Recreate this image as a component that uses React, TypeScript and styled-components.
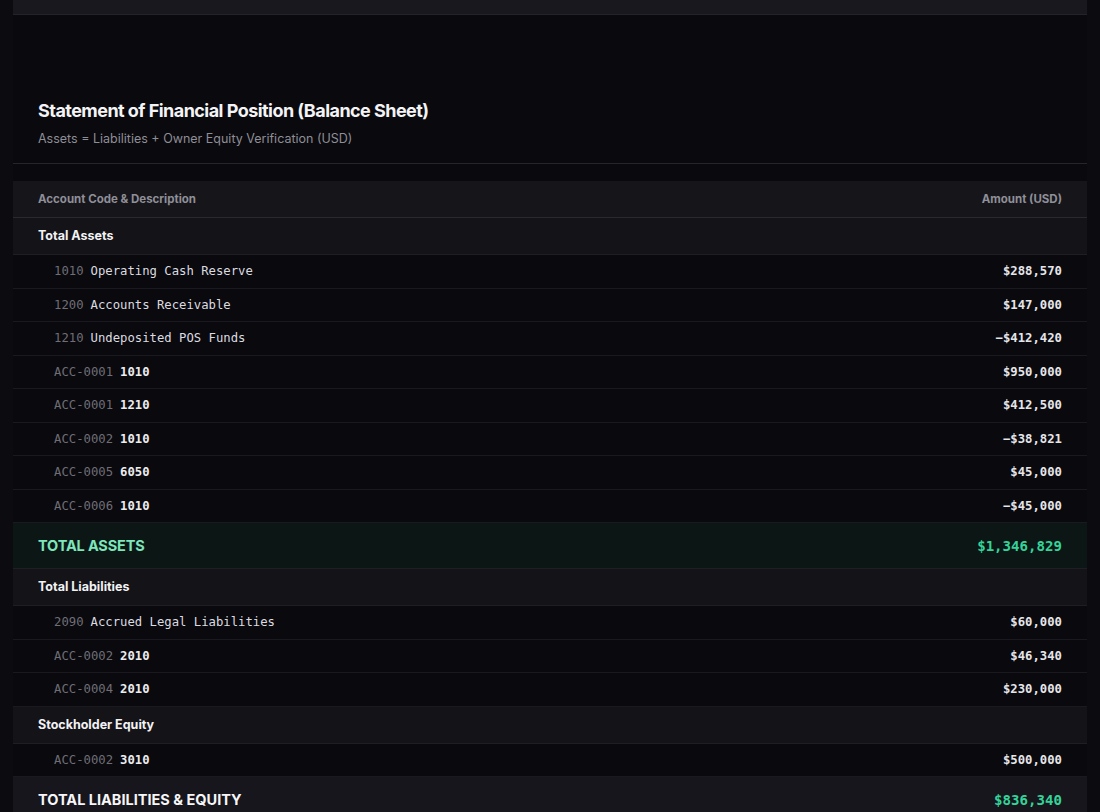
import React from "react";
import styled, { createGlobalStyle } from "styled-components";

const Global = createGlobalStyle`
  html, body { margin: 0; padding: 0; background: #0c0b10; }
  body { font-family: Inter, "Liberation Sans", Arial, sans-serif; -webkit-font-smoothing: antialiased; }
`;

const Page = styled.div`
  padding: 0 13px;
  min-height: 812px;
`;

const TopBar = styled.div`
  height: 14px;
  background: #19181f;
  border-bottom: 1px solid #24232a;
`;

const Card = styled.section`
  background: #0a090d;
  padding-top: 84px;
`;

const Header = styled.header`
  padding: 0 25px 15px;
  border-bottom: 1px solid #26252c;
`;

const Title = styled.h2`
  margin: 0;
  font-size: 18px;
  line-height: 24px;
  font-weight: 700;
  letter-spacing: -0.03em;
  color: #f4f4f6;
`;

const Subtitle = styled.p`
  margin: 7px 0 0;
  font-size: 12.5px;
  line-height: 18px;
  color: #8e8e97;
`;

const Table = styled.div`
  margin-top: 17px;
`;

const Row = styled.div<{ $kind: "head" | "section" | "item" | "total" | "grand" }>`
  display: flex;
  align-items: center;
  justify-content: space-between;
  line-height: 18px;
  padding: 0 25px 0 ${(p) => (p.$kind === "item" ? "41px" : "25px")};
  height: ${(p) =>
    p.$kind === "item" ? "33.5px" : p.$kind === "total" || p.$kind === "grand" ? "46px" : "37px"};
  box-sizing: border-box;
  background: ${(p) =>
    p.$kind === "head"
      ? "#16151a"
      : p.$kind === "section"
      ? "#141318"
      : p.$kind === "total"
      ? "#0c1715"
      : p.$kind === "grand"
      ? "#17161c"
      : "#0a090d"};
  border-bottom: 1px solid
    ${(p) => (p.$kind === "head" ? "#2a2930" : p.$kind === "item" ? "#1a191f" : "#1f1e24")};
`;

const HeadCell = styled.span`
  font-size: 11.5px;
  font-weight: 700;
  color: #8f8f98;
`;

const SectionLabel = styled.span`
  font-size: 12.5px;
  font-weight: 700;
  color: #f2f2f4;
`;

const Account = styled.span`
  display: flex;
  align-items: center;
  gap: 7px;
`;

const Mono = styled.span`
  font-family: "DejaVu Sans Mono", "Liberation Mono", monospace;
  font-size: 12.25px;
  line-height: 18px;
`;

const Code = styled(Mono)`
  color: #6f6e77;
`;

const Name = styled(Mono)<{ $strong?: boolean }>`
  color: ${(p) => (p.$strong ? "#ececef" : "#dcdce0")};
  font-weight: ${(p) => (p.$strong ? 700 : 400)};
`;

const Amount = styled(Mono)`
  color: #e6e6ea;
  font-weight: 700;
`;

const TotalLabel = styled.span<{ $green?: boolean }>`
  font-size: 14.5px;
  font-weight: 700;
  letter-spacing: ${(p) => (p.$green ? "-0.01em" : "0")};
  color: ${(p) => (p.$green ? "#7de6bd" : "#f6f6f8")};
`;

const TotalAmount = styled.span`
  font-family: "DejaVu Sans Mono", "Liberation Mono", monospace;
  font-size: 14.1px;
  font-weight: 700;
  color: #34d399;
`;

type Item = { code: string; name: string; amount: string; strong?: boolean };

const assets: Item[] = [
  { code: "1010", name: "Operating Cash Reserve", amount: "$288,570" },
  { code: "1200", name: "Accounts Receivable", amount: "$147,000" },
  { code: "1210", name: "Undeposited POS Funds", amount: "−$412,420" },
  { code: "ACC-0001", name: "1010", amount: "$950,000", strong: true },
  { code: "ACC-0001", name: "1210", amount: "$412,500", strong: true },
  { code: "ACC-0002", name: "1010", amount: "−$38,821", strong: true },
  { code: "ACC-0005", name: "6050", amount: "$45,000", strong: true },
  { code: "ACC-0006", name: "1010", amount: "−$45,000", strong: true },
];

const liabilities: Item[] = [
  { code: "2090", name: "Accrued Legal Liabilities", amount: "$60,000" },
  { code: "ACC-0002", name: "2010", amount: "$46,340", strong: true },
  { code: "ACC-0004", name: "2010", amount: "$230,000", strong: true },
];

const equity: Item[] = [{ code: "ACC-0002", name: "3010", amount: "$500,000", strong: true }];

const ItemRow = ({ item }: { item: Item }) => (
  <Row $kind="item">
    <Account>
      <Code>{item.code}</Code>
      <Name $strong={item.strong}>{item.name}</Name>
    </Account>
    <Amount>{item.amount}</Amount>
  </Row>
);

const Section = ({ title, items }: { title: string; items: Item[] }) => (
  <>
    <Row $kind="section">
      <SectionLabel>{title}</SectionLabel>
    </Row>
    {items.map((it, i) => (
      <ItemRow key={i} item={it} />
    ))}
  </>
);

export default function App() {
  return (
    <>
      <Global />
      <Page>
        <TopBar />
        <Card>
          <Header>
            <Title>Statement of Financial Position (Balance Sheet)</Title>
            <Subtitle>Assets = Liabilities + Owner Equity Verification (USD)</Subtitle>
          </Header>
          <Table>
            <Row $kind="head">
              <HeadCell>Account Code &amp; Description</HeadCell>
              <HeadCell>Amount (USD)</HeadCell>
            </Row>
            <Section title="Total Assets" items={assets} />
            <Row $kind="total">
              <TotalLabel $green>TOTAL ASSETS</TotalLabel>
              <TotalAmount>$1,346,829</TotalAmount>
            </Row>
            <Section title="Total Liabilities" items={liabilities} />
            <Section title="Stockholder Equity" items={equity} />
            <Row $kind="grand">
              <TotalLabel>TOTAL LIABILITIES &amp; EQUITY</TotalLabel>
              <TotalAmount>$836,340</TotalAmount>
            </Row>
          </Table>
        </Card>
      </Page>
    </>
  );
}
